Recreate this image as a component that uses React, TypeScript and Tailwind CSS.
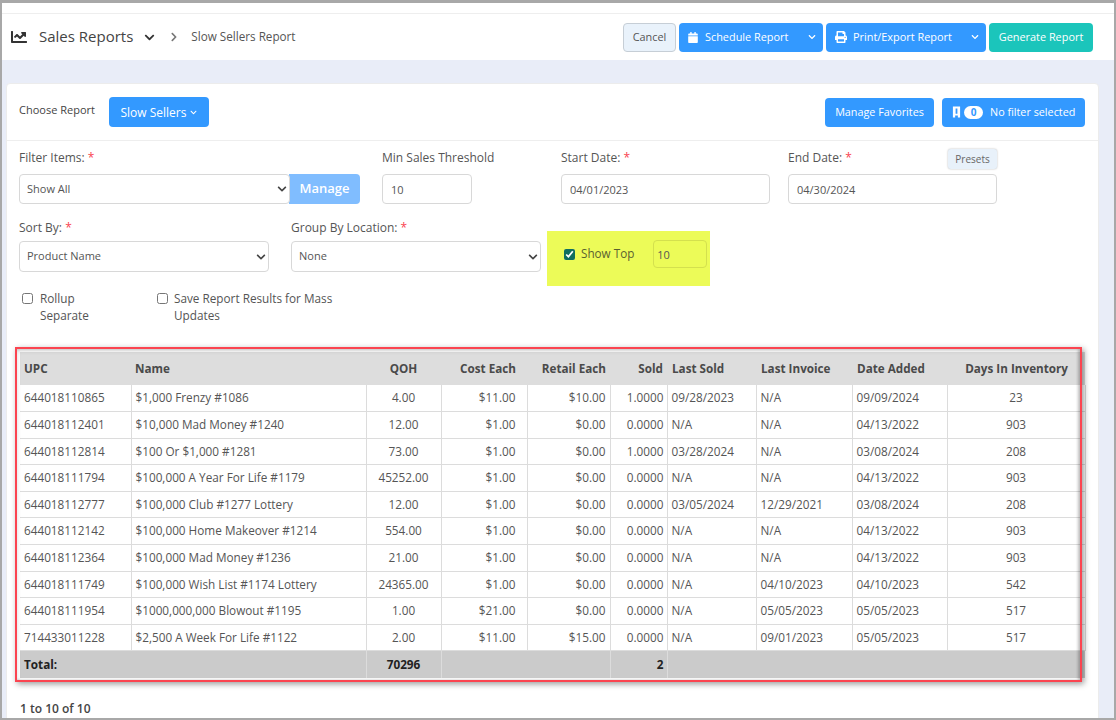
import React from 'react';
import { FaCalendar, FaChartLine, FaChevronDown, FaChevronRight, FaPrint } from 'react-icons/fa';

const rows = [
  ['644018110865', '$1,000 Frenzy #1086', '4.00', '$11.00', '$10.00', '1.0000', '09/28/2023', 'N/A', '09/09/2024', '23'],
  ['644018112401', '$10,000 Mad Money #1240', '12.00', '$1.00', '$0.00', '0.0000', 'N/A', 'N/A', '04/13/2022', '903'],
  ['644018112814', '$100 Or $1,000 #1281', '73.00', '$1.00', '$0.00', '1.0000', '03/28/2024', 'N/A', '03/08/2024', '208'],
  ['644018111794', '$100,000 A Year For Life #1179', '45252.00', '$1.00', '$0.00', '0.0000', 'N/A', 'N/A', '04/13/2022', '903'],
  ['644018112777', '$100,000 Club #1277 Lottery', '12.00', '$1.00', '$0.00', '0.0000', '03/05/2024', '12/29/2021', '03/08/2024', '208'],
  ['644018112142', '$100,000 Home Makeover #1214', '554.00', '$1.00', '$0.00', '0.0000', 'N/A', 'N/A', '04/13/2022', '903'],
  ['644018112364', '$100,000 Mad Money #1236', '21.00', '$1.00', '$0.00', '0.0000', 'N/A', 'N/A', '04/13/2022', '903'],
  ['644018111749', '$100,000 Wish List #1174 Lottery', '24365.00', '$1.00', '$0.00', '0.0000', 'N/A', '04/10/2023', '04/10/2023', '542'],
  ['644018111954', '$1000,000,000 Blowout #1195', '1.00', '$21.00', '$0.00', '0.0000', 'N/A', '05/05/2023', '05/05/2023', '517'],
  ['714433011228', '$2,500 A Week For Life #1122', '2.00', '$11.00', '$15.00', '0.0000', 'N/A', '09/01/2023', '05/05/2023', '517'],
];

const Req = () => <span className="text-[#f9424f]">*</span>;

const SelectBox = ({ value, className }: { value: string; className: string }) => (
  <div className={`relative ${className}`}>
    <select className="h-full w-full appearance-none rounded border border-[#d8d8d8] bg-white pl-[7px] text-[11px] text-[#555]">
      <option>{value}</option>
    </select>
    <FaChevronDown className="pointer-events-none absolute right-[3px] top-1/2 h-[10px] w-[10px] -translate-y-1/2 text-[#444]" />
  </div>
);

const TextBox = ({ value, className }: { value: string; className: string }) => (
  <input
    defaultValue={value}
    className={`rounded border border-[#d8d8d8] bg-white pl-2 text-[11px] text-[#555] ${className}`}
  />
);

const cell = 'border-r border-b border-[#dcdcdc] px-[4px] align-middle';

export default function App() {
  return (
    <div className="h-[720px] w-[1116px] overflow-hidden border-t-[3px] border-b-[2px] border-l-[2px] border-r-[2px] border-[#a8a8a8] bg-[#e9edf8] font-['Open_Sans',sans-serif] text-[12px] text-[#555]">
      {/* top bar */}
      <div className="h-[11px] border-b border-[#eeeeee] bg-white" />
      <div className="flex h-[46px] items-center bg-white pl-[9px] pr-[21px]">
        <FaChartLine className="h-[16px] w-[16px] text-[#333]" />
        <span className="-mt-[2px] ml-[12px] text-[15px] text-[#444]">Sales Reports</span>
        <FaChevronDown className="ml-[11px] h-[11px] w-[11px] text-[#333]" />
        <FaChevronRight className="ml-[14px] h-[10px] w-[10px] text-[#777]" />
        <span className="ml-[12px] text-[11.7px] text-[#555]">Slow Sellers Report</span>
        <div className="ml-auto flex h-[29px] items-stretch gap-[3px] text-[10.9px] text-white">
          <button className="w-[53px] rounded border border-[#c6ced6] bg-[#e9f2fb] text-[#555]">Cancel</button>
          <button className="flex w-[144px] items-center rounded bg-[#3399ff] pl-[9px]">
            <FaCalendar className="h-[11px] w-[10px]" />
            <span className="ml-[7px]">Schedule Report</span>
            <FaChevronDown className="ml-auto mr-[7px] h-[8px] w-[8px]" />
          </button>
          <button className="flex w-[160px] items-center rounded bg-[#3399ff] pl-[9px]">
            <FaPrint className="h-[12px] w-[12px]" />
            <span className="ml-[6px]">Print/Export Report</span>
            <FaChevronDown className="ml-auto mr-[7px] h-[8px] w-[8px]" />
          </button>
          <button className="w-[104px] rounded bg-[#1bc5bb]">Generate Report</button>
        </div>
      </div>

      {/* card */}
      <div className="mt-[23px] ml-[4px] mr-[15px] h-[640px] rounded-t border border-[#ececec] bg-white">
        <div className="flex h-[57px] items-center border-b border-[#eeeeee] pl-[12px] pr-[13px]">
          <span className="-mt-[3px] text-[11px] text-[#444]">Choose Report</span>
          <button className="ml-[14px] flex h-[30px] w-[100px] items-center justify-center gap-[4px] rounded bg-[#3399ff] pt-[1px] text-[12px] text-white">
            Slow Sellers
            <FaChevronDown className="h-[7px] w-[7px]" />
          </button>
          <button className="ml-auto h-[29px] w-[109px] rounded bg-[#3399ff] text-[10.8px] text-white">Manage Favorites</button>
          <button className="ml-[8px] flex h-[29px] w-[143px] items-center rounded bg-[#3399ff] pl-[10px] text-[10.8px] text-white">
            <svg viewBox="0 0 10 12" className="h-[12px] w-[9px]" fill="#ffffff">
              <path d="M1 0h8v12H6.5V10h-3v2H1z M4 2v6h2V2z" fillRule="evenodd" />
            </svg>
            <span className="ml-[3px] flex h-[13px] w-[19px] items-center justify-center rounded-full bg-white text-[10px] font-bold text-[#3399ff]">0</span>
            <span className="ml-[7px]">No filter selected</span>
          </button>
        </div>

        {/* filter fields */}
        <div className="pl-[12px]">
          <div className="flex pt-[8px]">
            <div className="w-[363px]">
              <div className="h-[25px] text-[12px] leading-[17px]">Filter Items: <Req /></div>
              <div className="flex h-[30px] w-[341px]">
                <SelectBox value="Show All" className="w-[271px]" />
                <button className="-ml-px w-[71px] rounded-r bg-[#80bdff] text-[13px] font-semibold text-white">Manage</button>
              </div>
            </div>
            <div className="w-[179px]">
              <div className="h-[25px] text-[12px] leading-[17px]">Min Sales Threshold</div>
              <TextBox value="10" className="h-[30px] w-[90px]" />
            </div>
            <div className="w-[227px]">
              <div className="h-[25px] text-[12px] leading-[17px]">Start Date: <Req /></div>
              <TextBox value="04/01/2023" className="h-[30px] w-[209px]" />
            </div>
            <div className="relative w-[209px]">
              <div className="h-[25px] text-[12px] leading-[17px]">End Date: <Req /></div>
              <TextBox value="04/30/2024" className="h-[30px] w-[209px]" />
              <button className="absolute right-0 top-0 h-[20px] w-[49px] rounded-[3px] bg-[#e8f1fa] text-[10px] text-[#666] shadow-[0_0_2px_rgba(0,0,0,0.3)]">Presets</button>
            </div>
          </div>

          <div className="mt-[14px] flex h-[68px]">
            <div className="w-[272px] pt-[1px]">
              <div className="h-[22px] text-[12px] leading-[17px]">Sort By: <Req /></div>
              <SelectBox value="Product Name" className="h-[31px] w-[250px]" />
            </div>
            <div className="w-[256px] pt-[1px]">
              <div className="h-[22px] text-[12px] leading-[17px]">Group By Location: <Req /></div>
              <SelectBox value="None" className="h-[31px] w-[250px]" />
            </div>
            <div className="mt-[13px] flex h-[55px] w-[163px] items-start bg-[#ecfb58] pl-[17px] pt-[9px]">
              <label className="flex h-[28px] items-center gap-[6px] text-[11.7px] text-[#5a5f30]">
                <input type="checkbox" defaultChecked className="h-[11px] w-[11px] accent-[#0f6e5e]" />
                Show Top
              </label>
              <input defaultValue="10" className="ml-[19px] h-[28px] w-[54px] rounded border border-[#d4e04e] bg-transparent pl-[3px] text-[11px] text-[#555]" />
            </div>
          </div>

          <div className="mt-[4px] flex pl-[3px] text-[11.75px] leading-[17px]">
            <label className="flex w-[135px] items-start gap-[7px]">
              <input type="checkbox" className="mt-[3px] h-[11px] w-[11px]" />
              <span className="w-[60px]">Rollup Separate</span>
            </label>
            <label className="flex w-[190px] items-start gap-[6px]">
              <input type="checkbox" className="mt-[3px] h-[11px] w-[11px]" />
              <span>Save Report Results for Mass Updates</span>
            </label>
          </div>
        </div>

        {/* results table */}
        <div className="relative mt-[28px] ml-[13px] w-[1065px]">
          <table className="w-[1065px] table-fixed border-collapse text-[11.75px] text-[#555]">
            <colgroup>
              <col className="w-[111px]" />
              <col className="w-[235px]" />
              <col className="w-[75px]" />
              <col className="w-[86px]" />
              <col className="w-[83px]" />
              <col className="w-[57px]" />
              <col className="w-[89px]" />
              <col className="w-[96px]" />
              <col className="w-[95px]" />
              <col className="w-[138px]" />
            </colgroup>
            <thead>
              <tr className="h-[33px] bg-[#dddddd] text-[11.7px] font-bold text-[#4a4a4a]">
                <th className="px-[4px] text-left">UPC</th>
                <th className="px-[4px] text-left">Name</th>
                <th className="px-[4px] text-center">QOH</th>
                <th className="px-[4px] pr-[11px] text-right">Cost Each</th>
                <th className="px-[4px] text-right">Retail Each</th>
                <th className="px-[4px] text-right">Sold</th>
                <th className="pl-[5px] text-left">Last Sold</th>
                <th className="pl-[5px] text-left">Last Invoice</th>
                <th className="pl-[5px] text-left">Date Added</th>
                <th className="px-[4px] pr-[17px] text-right">Days In Inventory</th>
              </tr>
            </thead>
            <tbody>
              {rows.map((r) => (
                <tr key={r[0]} className="h-[26.6px]">
                  <td className={cell}>{r[0]}</td>
                  <td className={`${cell} truncate`}>{r[1]}</td>
                  <td className={`${cell} text-center`}>{r[2]}</td>
                  <td className={`${cell} text-right pr-[11px]`}>{r[3]}</td>
                  <td className={`${cell} text-right`}>{r[4]}</td>
                  <td className={`${cell} text-right pr-[3px]`}>{r[5]}</td>
                  <td className={cell}>{r[6]}</td>
                  <td className={cell}>{r[7]}</td>
                  <td className={cell}>{r[8]}</td>
                  <td className={`${cell} text-center`}>{r[9]}</td>
                </tr>
              ))}
              <tr className="h-[27px] bg-[#cbcbcb] font-bold text-[#222]">
                <td className="px-[4px]" colSpan={2}>Total:</td>
                <td className="border-x border-[#dcdcdc] text-center">70296</td>
                <td colSpan={2} />
                <td className="border-x border-[#dcdcdc] pr-[3px] text-right">2</td>
                <td colSpan={4} />
              </tr>
            </tbody>
          </table>
          {/* red annotation box */}
          <div className="pointer-events-none absolute -left-[5px] -top-[5px] h-[335px] w-[1067px] border-2 border-[#fb4450] shadow-[2px_2px_6px_rgba(0,0,0,0.4),inset_0_2px_4px_rgba(0,0,0,0.15),inset_-2px_0_3px_rgba(0,0,0,0.2)]" />
        </div>

        <div className="mt-[22px] pl-[13px] text-[12px] font-semibold text-[#444]">1 to 10 of 10</div>
      </div>
    </div>
  );
}
